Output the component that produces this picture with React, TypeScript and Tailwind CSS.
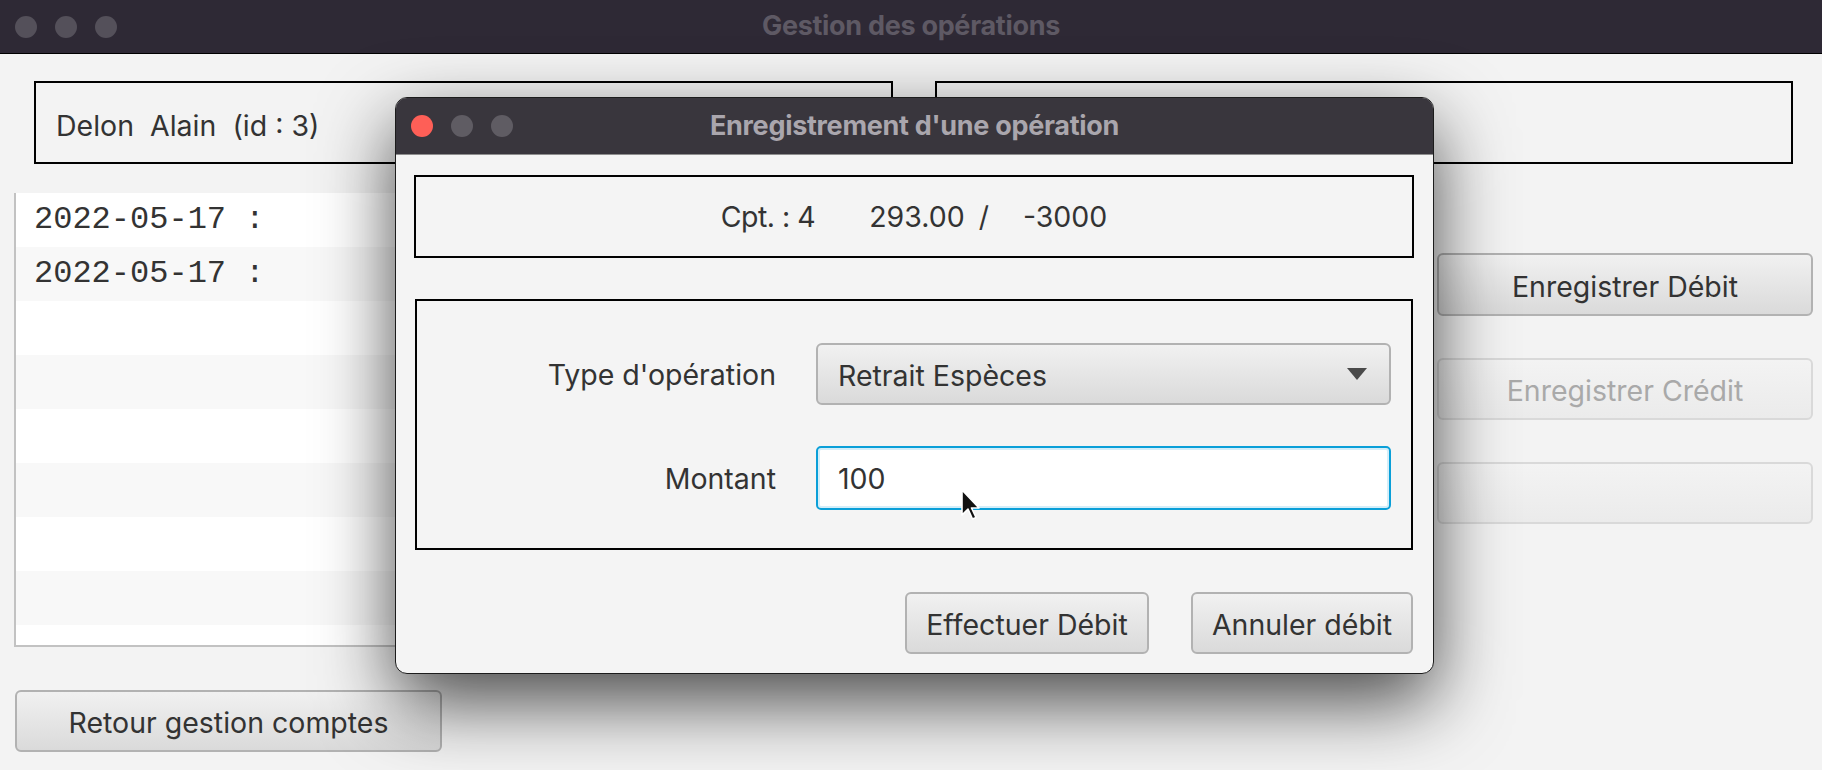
import React from 'react';

const ui = { fontFamily: 'Inter, "Liberation Sans", sans-serif' };

const Lights = ({ active }: { active: boolean }) => (
  <div className="absolute left-[15px] top-0 h-full flex items-center gap-[18px]">
    <span className={`w-[22px] h-[22px] rounded-full ${active ? 'bg-[#fe5f57]' : 'bg-[#54505a]'}`} />
    <span className={`w-[22px] h-[22px] rounded-full ${active ? 'bg-[#5f5c63]' : 'bg-[#54505a]'}`} />
    <span className={`w-[22px] h-[22px] rounded-full ${active ? 'bg-[#5f5c63]' : 'bg-[#54505a]'}`} />
  </div>
);

const Btn = ({ children, className = '', disabled = false }: { children?: React.ReactNode; className?: string; disabled?: boolean }) => (
  <div
    className={`flex items-center justify-center rounded-[6px] border-2 pt-[5px] text-[28.5px] ${
      disabled
        ? 'border-[#d9d9d9] bg-gradient-to-b from-[#f3f3f3] to-[#ebebeb] text-[#a9a9a9]'
        : 'border-[#b2b2b2] bg-gradient-to-b from-[#f1f1f1] to-[#dadada] text-[#333333]'
    } ${className}`}
  >
    {children}
  </div>
);

const Cursor = () => (
  <svg className="absolute left-[960px] top-[488px]" width="24" height="36" viewBox="0 0 24 36">
    <path d="M2 2 L2 27 L8 21 L12.5 31 L16 29.5 L11.5 20 L19 20 Z" fill="#111" stroke="#fff" strokeWidth="1.6" strokeLinejoin="round" />
  </svg>
);

const Dialog = () => (
  <div className="absolute left-[395px] top-[97px] w-[1039px] h-[577px] rounded-[12px] border border-[#1c1c1c] bg-[#f4f4f4] overflow-hidden shadow-[0_28px_75px_rgba(0,0,0,0.7)]">
    <div className="relative h-[57px] bg-[#39363d] border-b border-[#8e8e8e] flex items-center justify-center">
      <Lights active />
      <span className="text-[27px] font-bold text-[#aaa6ad] tracking-[-0.3px]">Enregistrement d'une opération</span>
    </div>
    <div className="pl-[18px] pr-[19px] pt-[20px] text-[#333333]">
      <div className="h-[83px] border-2 border-black flex items-center justify-center text-[28.5px] pt-[2px]">
        <span className="tracking-[-0.5px]">Cpt. : 4</span>
        <span className="ml-[54px]">293.00</span>
        <span className="ml-[14px]">/</span>
        <span className="ml-[34px]">-3000</span>
      </div>
      <div className="mx-[1px] mt-[41px] h-[251px] border-2 border-black pt-[42px]">
        <div className="grid grid-cols-[359px_575px] gap-x-[40px] gap-y-[41px] items-center text-[28.5px]">
          <div className="text-right pt-[2px]">Type d'opération</div>
          <Btn className="h-[62px] !justify-between pl-[20px] pr-[22px]">
            <span>Retrait Espèces</span>
            <svg width="20" height="12" viewBox="0 0 20 12" className="-mt-[5px]">
              <path d="M0 0 L20 0 L10 12 Z" fill="#4a4a4a" />
            </svg>
          </Btn>
          <div className="text-right pt-[2px]">Montant</div>
          <div className="h-[64px] rounded-[5px] border-2 border-[#0a9fd8] bg-white shadow-[inset_0_0_0_2px_#d4eef9] flex items-center pl-[20px] pt-[3px]">
            100
          </div>
        </div>
      </div>
      <div className="mt-[42px] flex justify-end gap-[42px] pr-[1px]">
        <Btn className="w-[244px] h-[62px]">Effectuer Débit</Btn>
        <Btn className="w-[222px] h-[62px]">Annuler débit</Btn>
      </div>
    </div>
  </div>
);

export default function App() {
  const rows = Array.from({ length: 9 }, (_, i) => i);
  return (
    <div className="relative w-[1822px] h-[770px] overflow-hidden bg-[#f3f3f3] text-[#333333]" style={ui}>
      <div className="relative h-[54px] bg-[#2e2935] border-b border-black flex items-center justify-center">
        <Lights active={false} />
        <span className="text-[27px] font-bold text-[#5e5964] tracking-[-0.3px]">Gestion des opérations</span>
      </div>

      <div className="flex gap-[42px] pl-[34px] pr-[29px] pt-[27px]">
        <div className="w-[859px] h-[83px] border-2 border-black flex items-center pl-[20px] pt-[8px] text-[28.5px] whitespace-pre">
          {'Delon  Alain  (id : 3)'}
        </div>
        <div className="flex-1 h-[83px] border-2 border-black" />
      </div>

      <div className="flex mt-[29px] pl-[14px] pr-[9px]">
        <div className="w-[1380px] h-[454px] border-l-2 border-b-2 border-[#c2c2c2] bg-white overflow-hidden">
          {rows.map((i) => (
            <div
              key={i}
              className={`h-[54px] flex items-center pl-[18px] text-[32px] ${i % 2 === 0 ? 'bg-white' : 'bg-[#f8f8f8]'}`}
              style={{ fontFamily: '"Liberation Mono", monospace' }}
            >
              {i < 2 ? '2022-05-17 :' : ''}
            </div>
          ))}
        </div>
        <div className="ml-auto w-[376px] flex flex-col gap-[42px] pt-[60px]">
          <Btn className="h-[63px]">Enregistrer Débit</Btn>
          <Btn className="h-[62px]" disabled>Enregistrer Crédit</Btn>
          <Btn className="h-[62px]" disabled />
        </div>
      </div>

      <div className="mt-[43px] pl-[15px]">
        <Btn className="w-[427px] h-[62px]">Retour gestion comptes</Btn>
      </div>

      <Dialog />
      <Cursor />
    </div>
  );
}
